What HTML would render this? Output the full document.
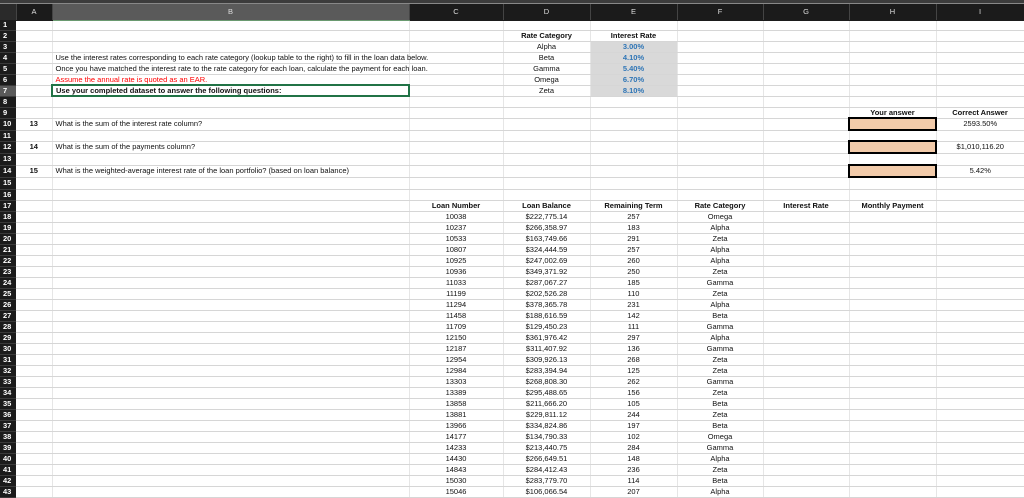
<!DOCTYPE html>
<html><head><meta charset="utf-8"><style>
*{margin:0;padding:0;box-sizing:border-box}
body{width:1024px;height:498px;overflow:hidden;background:#fff;font-family:"Liberation Sans",sans-serif;position:relative}
.top{position:absolute;left:0;top:0;width:1024px;height:4px;background:#3c3c3c;border-bottom:1px solid #888}
table{position:absolute;left:0;top:4px;border-collapse:collapse;table-layout:fixed;width:1024px}
td{border-right:1px solid #e6e6e6;border-bottom:1px solid #d6d6d6;font-size:7.5px;color:#111;text-align:center;white-space:nowrap;overflow:visible;line-height:1;padding:0}
tr.h td{background:#1b1b1b;color:#ddd;font-size:7.5px;height:16px;border-right:1px solid #444;border-bottom:1px solid #1b1b1b}
td.rh{background:#1b1b1b;color:#fff;font-weight:bold;font-size:7.5px;text-align:left;padding-left:3px;border-bottom:1px solid #3a3a3a;border-right:none}
td.l{text-align:left;padding-left:3px}
td.b{font-weight:bold}
td.g{background:#d9d9d9;color:#2e75b6;font-weight:bold}
td.o{background:#f2cbaa;border:2px solid #000}
td.sel{border:2px solid #217346}
</style></head><body>
<div class="top"></div>
<table>
<colgroup><col style="width:16px"><col style="width:36px"><col style="width:357px"><col style="width:94px"><col style="width:87px"><col style="width:87px"><col style="width:86px"><col style="width:86px"><col style="width:87px"><col style="width:88px"></colgroup>
<tr class="h"><td style="background:#2a2a2a"></td><td>A</td><td style="background:#5a5a5a;border-bottom:1px solid #6a9a70">B</td><td>C</td><td>D</td><td>E</td><td>F</td><td>G</td><td>H</td><td>I</td></tr>
<tr style="height:10px"><td class="rh">1</td><td></td><td></td><td></td><td></td><td></td><td></td><td></td><td></td><td></td></tr>
<tr style="height:11px"><td class="rh">2</td><td></td><td></td><td></td><td class="b">Rate Category</td><td class="b">Interest Rate</td><td></td><td></td><td></td><td></td></tr>
<tr style="height:11px"><td class="rh">3</td><td></td><td></td><td></td><td>Alpha</td><td class="g">3.00%</td><td></td><td></td><td></td><td></td></tr>
<tr style="height:11px"><td class="rh">4</td><td></td><td class="l">Use the interest rates corresponding to each rate category (lookup table to the right) to fill in the loan data below.</td><td></td><td>Beta</td><td class="g">4.10%</td><td></td><td></td><td></td><td></td></tr>
<tr style="height:11px"><td class="rh">5</td><td></td><td class="l">Once you have matched the interest rate to the rate category for each loan, calculate the payment for each loan.</td><td></td><td>Gamma</td><td class="g">5.40%</td><td></td><td></td><td></td><td></td></tr>
<tr style="height:11px"><td class="rh">6</td><td></td><td class="l" style="color:#f00">Assume the annual rate is quoted as an EAR.</td><td></td><td>Omega</td><td class="g">6.70%</td><td></td><td></td><td></td><td></td></tr>
<tr style="height:11px"><td class="rh" style="background:#5a5a5a">7</td><td></td><td class="l b sel">Use your completed dataset to answer the following questions:</td><td></td><td>Zeta</td><td class="g">8.10%</td><td></td><td></td><td></td><td></td></tr>
<tr style="height:11px"><td class="rh">8</td><td></td><td></td><td></td><td></td><td></td><td></td><td></td><td></td><td></td></tr>
<tr style="height:11px"><td class="rh">9</td><td></td><td></td><td></td><td></td><td></td><td></td><td></td><td class="b">Your answer</td><td class="b">Correct Answer</td></tr>
<tr style="height:12px"><td class="rh">10</td><td class="b">13</td><td class="l">What is the sum of the interest rate column?</td><td></td><td></td><td></td><td></td><td></td><td class="o"></td><td>2593.50%</td></tr>
<tr style="height:11px"><td class="rh">11</td><td></td><td></td><td></td><td></td><td></td><td></td><td></td><td></td><td></td></tr>
<tr style="height:12px"><td class="rh">12</td><td class="b">14</td><td class="l">What is the sum of the payments column?</td><td></td><td></td><td></td><td></td><td></td><td class="o"></td><td>$1,010,116.20</td></tr>
<tr style="height:12px"><td class="rh">13</td><td></td><td></td><td></td><td></td><td></td><td></td><td></td><td></td><td></td></tr>
<tr style="height:12px"><td class="rh">14</td><td class="b">15</td><td class="l">What is the weighted-average interest rate of the loan portfolio? (based on loan balance)</td><td></td><td></td><td></td><td></td><td></td><td class="o"></td><td>5.42%</td></tr>
<tr style="height:12px"><td class="rh">15</td><td></td><td></td><td></td><td></td><td></td><td></td><td></td><td></td><td></td></tr>
<tr style="height:11px"><td class="rh">16</td><td></td><td></td><td></td><td></td><td></td><td></td><td></td><td></td><td></td></tr>
<tr style="height:11px"><td class="rh">17</td><td></td><td></td><td class="b">Loan Number</td><td class="b">Loan Balance</td><td class="b">Remaining Term</td><td class="b">Rate Category</td><td class="b">Interest Rate</td><td class="b">Monthly Payment</td><td></td></tr>
<tr style="height:11px"><td class="rh">18</td><td></td><td></td><td>10038</td><td>$222,775.14</td><td>257</td><td>Omega</td><td></td><td></td><td></td></tr>
<tr style="height:11px"><td class="rh">19</td><td></td><td></td><td>10237</td><td>$266,358.97</td><td>183</td><td>Alpha</td><td></td><td></td><td></td></tr>
<tr style="height:11px"><td class="rh">20</td><td></td><td></td><td>10533</td><td>$163,749.66</td><td>291</td><td>Zeta</td><td></td><td></td><td></td></tr>
<tr style="height:11px"><td class="rh">21</td><td></td><td></td><td>10807</td><td>$324,444.59</td><td>257</td><td>Alpha</td><td></td><td></td><td></td></tr>
<tr style="height:11px"><td class="rh">22</td><td></td><td></td><td>10925</td><td>$247,002.69</td><td>260</td><td>Alpha</td><td></td><td></td><td></td></tr>
<tr style="height:11px"><td class="rh">23</td><td></td><td></td><td>10936</td><td>$349,371.92</td><td>250</td><td>Zeta</td><td></td><td></td><td></td></tr>
<tr style="height:11px"><td class="rh">24</td><td></td><td></td><td>11033</td><td>$287,067.27</td><td>185</td><td>Gamma</td><td></td><td></td><td></td></tr>
<tr style="height:11px"><td class="rh">25</td><td></td><td></td><td>11199</td><td>$202,526.28</td><td>110</td><td>Zeta</td><td></td><td></td><td></td></tr>
<tr style="height:11px"><td class="rh">26</td><td></td><td></td><td>11294</td><td>$378,365.78</td><td>231</td><td>Alpha</td><td></td><td></td><td></td></tr>
<tr style="height:11px"><td class="rh">27</td><td></td><td></td><td>11458</td><td>$188,616.59</td><td>142</td><td>Beta</td><td></td><td></td><td></td></tr>
<tr style="height:11px"><td class="rh">28</td><td></td><td></td><td>11709</td><td>$129,450.23</td><td>111</td><td>Gamma</td><td></td><td></td><td></td></tr>
<tr style="height:11px"><td class="rh">29</td><td></td><td></td><td>12150</td><td>$361,976.42</td><td>297</td><td>Alpha</td><td></td><td></td><td></td></tr>
<tr style="height:11px"><td class="rh">30</td><td></td><td></td><td>12187</td><td>$311,407.92</td><td>136</td><td>Gamma</td><td></td><td></td><td></td></tr>
<tr style="height:11px"><td class="rh">31</td><td></td><td></td><td>12954</td><td>$309,926.13</td><td>268</td><td>Zeta</td><td></td><td></td><td></td></tr>
<tr style="height:11px"><td class="rh">32</td><td></td><td></td><td>12984</td><td>$283,394.94</td><td>125</td><td>Zeta</td><td></td><td></td><td></td></tr>
<tr style="height:11px"><td class="rh">33</td><td></td><td></td><td>13303</td><td>$268,808.30</td><td>262</td><td>Gamma</td><td></td><td></td><td></td></tr>
<tr style="height:11px"><td class="rh">34</td><td></td><td></td><td>13389</td><td>$295,488.65</td><td>156</td><td>Zeta</td><td></td><td></td><td></td></tr>
<tr style="height:11px"><td class="rh">35</td><td></td><td></td><td>13858</td><td>$211,666.20</td><td>105</td><td>Beta</td><td></td><td></td><td></td></tr>
<tr style="height:11px"><td class="rh">36</td><td></td><td></td><td>13881</td><td>$229,811.12</td><td>244</td><td>Zeta</td><td></td><td></td><td></td></tr>
<tr style="height:11px"><td class="rh">37</td><td></td><td></td><td>13966</td><td>$334,824.86</td><td>197</td><td>Beta</td><td></td><td></td><td></td></tr>
<tr style="height:11px"><td class="rh">38</td><td></td><td></td><td>14177</td><td>$134,790.33</td><td>102</td><td>Omega</td><td></td><td></td><td></td></tr>
<tr style="height:11px"><td class="rh">39</td><td></td><td></td><td>14233</td><td>$213,440.75</td><td>284</td><td>Gamma</td><td></td><td></td><td></td></tr>
<tr style="height:11px"><td class="rh">40</td><td></td><td></td><td>14430</td><td>$266,649.51</td><td>148</td><td>Alpha</td><td></td><td></td><td></td></tr>
<tr style="height:11px"><td class="rh">41</td><td></td><td></td><td>14843</td><td>$284,412.43</td><td>236</td><td>Zeta</td><td></td><td></td><td></td></tr>
<tr style="height:11px"><td class="rh">42</td><td></td><td></td><td>15030</td><td>$283,779.70</td><td>114</td><td>Beta</td><td></td><td></td><td></td></tr>
<tr style="height:11px"><td class="rh">43</td><td></td><td></td><td>15046</td><td>$106,066.54</td><td>207</td><td>Alpha</td><td></td><td></td><td></td></tr>
</table>
</body></html>
